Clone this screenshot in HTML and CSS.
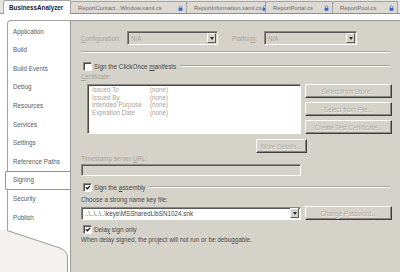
FILE: index.html
```html
<!DOCTYPE html>
<html>
<head>
<meta charset="utf-8">
<link rel="stylesheet" href="styles.css">
</head>
<body>
<div class="tabs">
  <div class="tab active w1">BusinessAnalyzer</div>
  <div class="tab w2"><span>ReportContact...Window.xaml.cs</span><svg class="lock" width="5" height="6" viewBox="0 0 5 6"><path d="M1.3 3V1.9a1.2 1.2 0 0 1 2.4 0V3" fill="none" stroke="#7d8fb8" stroke-width=".8"/><rect x=".6" y="2.8" width="3.8" height="3" fill="#3763d2"/></svg></div>
  <div class="tab w3"><span>ReportInformation.xaml.cs</span><svg class="lock" width="5" height="6" viewBox="0 0 5 6"><path d="M1.3 3V1.9a1.2 1.2 0 0 1 2.4 0V3" fill="none" stroke="#7d8fb8" stroke-width=".8"/><rect x=".6" y="2.8" width="3.8" height="3" fill="#3763d2"/></svg></div>
  <div class="tab w4"><span>ReportPortal.cs</span><svg class="lock" width="5" height="6" viewBox="0 0 5 6"><path d="M1.3 3V1.9a1.2 1.2 0 0 1 2.4 0V3" fill="none" stroke="#7d8fb8" stroke-width=".8"/><rect x=".6" y="2.8" width="3.8" height="3" fill="#3763d2"/></svg></div>
  <div class="tab w5"><span>ReportPool.cs</span><svg class="lock" width="5" height="6" viewBox="0 0 5 6"><path d="M1.3 3V1.9a1.2 1.2 0 0 1 2.4 0V3" fill="none" stroke="#7d8fb8" stroke-width=".8"/><rect x=".6" y="2.8" width="3.8" height="3" fill="#3763d2"/></svg></div>
</div>
<div class="main">
  <div class="nav">
    <div class="panel">
      <div class="item">Application</div>
      <div class="item">Build</div>
      <div class="item">Build Events</div>
      <div class="item">Debug</div>
      <div class="item">Resources</div>
      <div class="item">Services</div>
      <div class="item">Settings</div>
      <div class="item">Reference Paths</div>
      <div class="item sel">Signing</div>
      <div class="item">Security</div>
      <div class="item">Publish</div>
    </div>
    <svg class="curve" width="70" height="42" viewBox="0 0 70 42"><path d="M0 0H7L60 18Q67 21 67.5 27V42H0Z" fill="#f3f2ee"/><path d="M7 0.5L60 18Q67 21 67.5 27V42" fill="none" stroke="#9a9994" stroke-width="1"/></svg>
  </div>
  <div class="content">
    <div class="cfg">
      <span class="dis lbl-cfg"><u>C</u>onfiguration:</span>
      <div class="combo dis c1"><span>N/A</span><i class="dd"><b></b></i></div>
      <span class="dis lbl-plat">Platfor<u>m</u>:</span>
      <div class="combo dis c2"><span>N/A</span><i class="dd"><b></b></i></div>
    </div>
    <div class="sep"></div>
    <div class="grp g1"><span class="cb"></span><span>Sign the ClickOnce <u>m</u>anifests</span><span class="gl"></span></div>
    <div class="dis row8 cert"><u>C</u>ertificate:</div>
    <div class="certrow">
      <div class="list">
        <span>Issued To</span><span>(none)</span>
        <span>Issued By</span><span>(none)</span>
        <span>Intended Purpose</span><span>(none)</span>
        <span>Expiration Date</span><span>(none)</span>
      </div>
      <div class="btns">
        <div class="btn">Select from Store...</div>
        <div class="btn">Select from File...</div>
        <div class="btn">Create Test Certificate...</div>
      </div>
    </div>
    <div class="morerow"><div class="btn more">More Details...</div></div>
    <div class="dis row8 ts">Timestamp server <u>U</u>RL:</div>
    <div class="tb"></div>
    <div class="grp g2"><span class="cb"><svg width="7" height="7" viewBox="0 0 7 7"><path d="M1 3.2L2.8 5L6 1.6" fill="none" stroke="#111" stroke-width="1.4"/></svg></span><span>Sign the <u>a</u>ssembly</span><span class="gl"></span></div>
    <div class="row8 choose">Choose a strong name key file:</div>
    <div class="keyrow">
      <div class="combo key"><span>..\..\..\..\keys\MSSharedLibSN1024.snk</span><i class="dd"><b></b></i></div>
      <div class="btn chg">Change Password...</div>
    </div>
    <div class="grp g3"><span class="cb"><svg width="7" height="7" viewBox="0 0 7 7"><path d="M1 3.2L2.8 5L6 1.6" fill="none" stroke="#111" stroke-width="1.4"/></svg></span><span>Dela<u>y</u> sign only</span></div>
    <div class="row8 note">When delay signed, the project will not run or be debuggable.</div>
  </div>
</div>
</body>
</html>
```

FILE: styles.css
```css
* { box-sizing: border-box; margin: 0; padding: 0; }
body {
  width: 400px; height: 272px; overflow: hidden;
  font-family: "Liberation Sans", Arial, sans-serif;
  font-size: 6.3px; color: #4a4a4a; background: #fff;
}
u { text-decoration: underline; }

.tabs {
  height: 14px; display: flex; align-items: flex-end;
  background: #e6e4de; border-bottom: 1px solid #8e8e8e; padding-left: 3px;
}
.tab {
  height: 12px; display: flex; align-items: center; justify-content: space-between;
  border: 1px solid #a4a4a4; border-bottom: none; border-radius: 3px 1px 0 0;
  background: #dcdad3; color: #6a6a6a; padding: 0 3px 0 7px; margin-right: -1px;
  font-size: 5.8px; white-space: nowrap; overflow: hidden;
}
.tab.active {
  height: 14px; margin-bottom: -1px; background: #fff; color: #222;
  font-weight: bold; font-size: 6.3px; padding-left: 5px; z-index: 1;
}
.w1 { width: 68px; }
.w2 { width: 117px; }
.w3 { width: 80px; }
.w4 { width: 68px; }
.w5 { width: 66px; }
.lock { display: block; flex: none; }

.main { display: flex; padding-top: 6px; height: 258px; }
.nav { width: 70px; flex: none; display: flex; flex-direction: column; }
.panel {
  margin-left: 7px; height: 210px; border-left: 1px solid #a3a29d; border-top: 1px solid #a3a29d;
  border-top-left-radius: 4px; padding-top: 1.6px; background: #fff;
}
.item { height: 18.6px; line-height: 18.6px; padding-left: 5px; color: #5a5a5a; }
.item.sel {
  margin-left: -3px; padding-left: 7px; border: 1px solid #96958f; border-right: none;
  border-radius: 2px 0 0 2px; line-height: 16.6px; background: #fff;
}
.curve { display: block; }

.content {
  flex: 1; background: #d5d2ca; border-left: 1px solid #9a9994; border-top: 1px solid #9a9994;
  padding: 0 8px 0 10px; display: flex; flex-direction: column;
}
.dis { color: #a7a49d; }

.cfg { display: flex; align-items: center; height: 14px; margin-top: 10px; }
.lbl-cfg { width: 46px; }
.lbl-plat { width: 32px; margin-left: 14px; }
.combo {
  height: 14px; display: flex; align-items: center; justify-content: space-between;
  border: 1px solid; border-color: #8a8882 #fff #fff #8a8882;
  box-shadow: inset 1px 1px 0 #5a5955; padding: 0 1px 0 3px; background: #d5d2ca;
}
.c1 { width: 91px; }
.c2 { width: 93px; }
.dd {
  width: 9px; height: 10px; background: #d5d2ca; display: flex; align-items: center; justify-content: center;
  border: 1px solid; border-color: #fff #5a5955 #5a5955 #fff;
}
.dd b { width: 0; height: 0; border-left: 2.5px solid transparent; border-right: 2.5px solid transparent; border-top: 3px solid #2a2a2a; }

.sep { height: 2px; margin-top: 6px; border-top: 1px solid #a6a49e; border-bottom: 1px solid #fff; margin-right: 2px; }

.grp { display: flex; align-items: center; height: 10px; color: #444; }
.g1 { margin-top: 8px; }
.g2 { margin-top: 6px; }
.g3 { margin-top: 4px; }
.cb {
  width: 9px; height: 9px; margin: 0 2px 0 2px; background: #fff; flex: none;
  border: 1px solid; border-color: #8a8882 #fff #fff #8a8882; box-shadow: inset 1px 1px 0 #4a4946;
  display: flex; align-items: center; justify-content: center;
}
.cb svg { display: block; margin: 0 0 0 1px; }
.gl { flex: 1; height: 2px; margin: 0 2px 0 4px; border-top: 1px solid #a6a49e; border-bottom: 1px solid #fff; }

.row8 { height: 8px; line-height: 8px; }
.cert { margin-top: 2px; }
.certrow { display: flex; margin-top: 3px; height: 51px; }
.list {
  margin-left: 6px; width: 214px; height: 50px; background: #fff;
  border: 1px solid; border-color: #8a8882 #fff #fff #8a8882; box-shadow: inset 1px 1px 0 #4a4946;
  display: grid; grid-template-columns: 58px auto; grid-auto-rows: 7.6px; align-content: start;
  padding: 1.2px 0 0 4px; color: #a7a49d; line-height: 7.6px;
}
.btns { margin-left: 4px; width: 87px; display: flex; flex-direction: column; gap: 4px; }
.btn {
  height: 14px; display: flex; align-items: center; justify-content: center;
  background: #d5d2ca; color: #a9a69f; text-shadow: 0.5px 0.5px 0 #f4f3ef;
  border: 1px solid; border-color: #fff #3f3e3b #3f3e3b #fff; box-shadow: inset -1px -1px 0 #8a8882;
}
.morerow { display: flex; margin-top: 4px; }
.more { width: 51px; margin-left: 175px; }
.ts { margin-top: 2px; }
.tb {
  margin-top: 1px; width: 220px; height: 12px; background: #d5d2ca;
  border: 1px solid; border-color: #8a8882 #fff #fff #8a8882; box-shadow: inset 1px 1px 0 #5a5955;
}
.choose { margin-top: 4px; }
.keyrow { display: flex; margin-top: 2px; align-items: center; }
.key { width: 220px; height: 13px; background: #fff; color: #444; }
.chg { width: 87px; margin-left: 4px; }
.note { margin-top: 2px; }
```
